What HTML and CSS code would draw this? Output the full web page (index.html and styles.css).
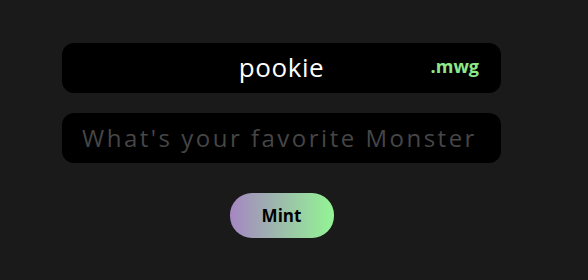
FILE: index.html
```html
<!DOCTYPE html>
<html>
<head>
<meta charset="utf-8">
<link rel="stylesheet" href="styles.css">
</head>
<body>
<main class="form">
  <div class="field">
    <span class="name">pookie</span>
    <span class="suffix">.mwg</span>
  </div>
  <div class="field field-placeholder">
    <span class="placeholder">What's your favorite Monster</span>
  </div>
  <button class="mint">Mint</button>
</main>
</body>
</html>
```
FILE: styles.css
```css
html, body {
  margin: 0;
  padding: 0;
  background: #1a1a1a;
  width: 588px;
  height: 280px;
  overflow: hidden;
  font-family: "Open Sans", "Noto Sans", sans-serif;
}
.form {
  width: 439px;
  margin-left: 62px;
  display: flex;
  flex-direction: column;
  align-items: center;
  padding-top: 43px;
}
.field {
  width: 439px;
  height: 50px;
  box-sizing: border-box;
  background: #000;
  border-radius: 12px;
  display: flex;
  align-items: center;
  justify-content: center;
  position: relative;
  margin-bottom: 20px;
}
.name {
  color: #fff;
  font-size: 26px;
  letter-spacing: 0.6px;
  margin-top: -2px;
}
.suffix {
  position: absolute;
  right: 22px;
  top: 50%;
  transform: translateY(-58%);
  color: #8ee88a;
  font-weight: 700;
  font-size: 18px;
}
.field-placeholder {
  justify-content: flex-start;
  padding: 0 20px;
  overflow: hidden;
}
.placeholder {
  color: #464646;
  font-size: 24px;
  letter-spacing: 2.5px;
  white-space: nowrap;
  overflow: hidden;
  margin-top: -2px;
}
.mint {
  margin-top: 10px;
  width: 104px;
  height: 45px;
  border: none;
  border-radius: 22px;
  background: linear-gradient(90deg, #a586c2, #93f593);
  color: #000;
  font-family: inherit;
  font-weight: 700;
  font-size: 17px;
  cursor: pointer;
}
```
